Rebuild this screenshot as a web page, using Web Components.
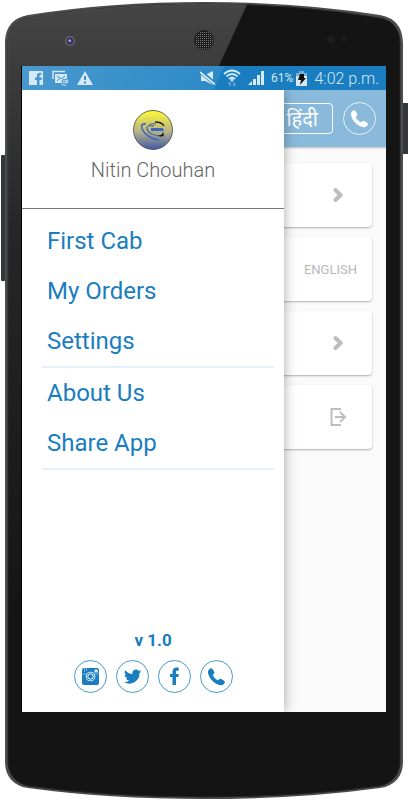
<!DOCTYPE html>
<html lang="en">
<head>
<meta charset="utf-8">
<meta name="viewport" content="width=device-width, initial-scale=1">
<title>First Cab</title>
<style>
    body {
        margin: 0;
        background: #fff;
        font-family: Roboto, "Noto Sans", sans-serif;
    }
</style>
</head>
<body>
<phone-frame>
    <status-bar></status-bar>
    <app-screen>
        <app-header></app-header>
        <option-card label="First Cab" icon="chevron"></option-card>
        <option-card label="Language" text="ENGLISH"></option-card>
        <option-card label="Settings" icon="chevron"></option-card>
        <option-card label="Logout" icon="logout"></option-card>
        <side-drawer slot="drawer" name="Nitin Chouhan" version="v 1.0">
            <menu-item>First Cab</menu-item>
            <menu-item>My Orders</menu-item>
            <menu-item divider>Settings</menu-item>
            <menu-item>About Us</menu-item>
            <menu-item divider>Share App</menu-item>
            <round-link slot="social" icon="instagram" label="Instagram"></round-link>
            <round-link slot="social" icon="twitter" label="Twitter"></round-link>
            <round-link slot="social" icon="facebook" label="Facebook"></round-link>
            <round-link slot="social" icon="phone" label="Call us"></round-link>
        </side-drawer>
    </app-screen>
</phone-frame>

<script>
const ROUND_ICONS = {
    phone: `<path fill="currentColor" d="M9.500 9c1-1 2-1 3 0l1.500 2.500c.6 1 .5 1.800-.3 2.500l-1 1c1 2.500 3 4.500 5.300 5.300l1.200-1c.8-.7 1.600-.7 2.500-.1l2.300 1.500c1 .7 1.200 1.500.5 2.500-1.500 2-3.500 2.500-6 1.600C13.500 23 9.700 18.800 8.300 14c-.7-2.200-.2-3.800 1.200-5z"/>`,
    instagram: `<path fill="currentColor" d="M10 8h13a2 2 0 0 1 2 2v13a2 2 0 0 1-2 2H10a2 2 0 0 1-2-2V10a2 2 0 0 1 2-2z"/>
        <path fill="#d9ecf7" d="M20.500 9.500H23a.8.8 0 0 1 .8.8v2.200h-3.300z"/>
        <path stroke="#8cc2e4" stroke-width=".8" d="M8 14h4M21 14h4M10.500 8v4M12.500 8v3"/>
        <circle cx="16.500" cy="16.500" r="4.800" fill="#fff"/><circle cx="16.500" cy="16.500" r="3.900" fill="currentColor"/>
        <circle cx="16.500" cy="16.500" r="2.700" fill="currentColor" stroke="#fff" stroke-width="1"/>`,
    twitter: `<g transform="translate(8 8) scale(.72)"><path fill="currentColor" d="M24 4.600a10 10 0 0 1-2.800.8 5 5 0 0 0 2.100-2.700 10 10 0 0 1-3.100 1.200 4.900 4.900 0 0 0-8.400 4.500A14 14 0 0 1 1.700 3.200a4.900 4.900 0 0 0 1.500 6.500 5 5 0 0 1-2.200-.6 4.900 4.900 0 0 0 3.900 4.900 5 5 0 0 1-2.200.1 4.900 4.900 0 0 0 4.600 3.400A10 10 0 0 1 0 19.500 14 14 0 0 0 21.500 7.100 10 10 0 0 0 24 4.600z"/></g>`,
    facebook: `<path fill="currentColor" d="M14.500 25v-8H12v-3h2.500v-2c0-3 1.500-4.500 4-4.500h2.200v3.200h-1.500c-.9 0-1.200.4-1.200 1.300v2h2.800l-.4 3H18v8z"/>`
};

const CARD_ICONS = {
    chevron: `<path d="M16.500 7l5 5-5 5" fill="none" stroke="#bdbdbd" stroke-width="4" stroke-linecap="round"/>`,
    logout: `<path d="M22 4H12.500v16H22" fill="none" stroke="#bdbdbd" stroke-width="2"/>
        <path d="M16 12h10M21 7l5 5-5 5" fill="none" stroke="#bdbdbd" stroke-width="2"/>`
};

class PhoneFrame extends HTMLElement {

    constructor() {
        super();
        this.shadowDOM = this.attachShadow({mode: "open"});
    }

    connectedCallback() {
        this.render();
    }

    render() {
        this.shadowDOM.innerHTML = `
        <style>
        :host {
            display: flex;
            position: relative;
            box-sizing: border-box;
            min-height: 100vh;
            padding: 66px 22px 88px;
        }

        .shell {
            position: absolute;
            inset: 0;
            width: 100%;
            height: 100%;
        }

        .display {
            position: relative;
            flex: 1;
            min-width: 0;
            display: flex;
            flex-direction: column;
            box-shadow: -1px 0 #000;
        }
        </style>
        <svg class="shell" viewBox="0 0 408 800" preserveAspectRatio="none" aria-hidden="true">
            <defs>
                <linearGradient id="gloss" x1="0" y1="0" x2="0" y2="1">
                    <stop offset="0" stop-color="#fff" stop-opacity=".21"/>
                    <stop offset=".35" stop-color="#fff" stop-opacity=".08"/>
                    <stop offset="1" stop-color="#fff" stop-opacity="0"/>
                </linearGradient>
                <pattern id="mesh" width="2" height="2" patternUnits="userSpaceOnUse">
                    <rect width="2" height="2" fill="#1c1c1c"/>
                    <rect width="1" height="1" fill="#777"/>
                </pattern>
                <clipPath id="body"><path d="M8 44C8 30 14 21 28 18Q110 4 204 4T380 18C394 21 400 30 400 44V761C400 774 393 783 380 786Q300 797 204 797T28 786C15 783 8 774 8 761z"/></clipPath>
            </defs>
            <rect x="1" y="155" width="6" height="126" rx="1" fill="#343839"/>
            <rect x="402" y="103" width="8" height="51" rx="1" fill="#343839"/>
            <path fill="#4b4c4d" d="M5 44C5 28 12 18 28 15Q110 2 204 2T380 15C396 18 403 28 403 44V762C403 776 395 786 380 788Q300 799 204 799T28 788C13 786 5 776 5 762z"/>
            <path fill="#141414" stroke="#252525" d="M8 44C8 30 14 21 28 18Q110 4 204 4T380 18C394 21 400 30 400 44V761C400 774 393 783 380 786Q300 797 204 797T28 786C15 783 8 774 8 761z"/>
            <path clip-path="url(#body)" fill="url(#gloss)" d="M0 0H249L219 66 0 640z"/>
            <circle cx="70" cy="41" r="5" fill="#666"/><circle cx="70" cy="41" r="3.500" fill="#34304f"/><circle cx="70" cy="41" r="1.800" fill="#5a50c8"/><circle cx="69.500" cy="40.500" r="1" fill="#d0ccef"/>
            <circle cx="204" cy="40" r="9.500" fill="url(#mesh)" stroke="#222"/>
            <circle cx="331" cy="39" r="4" fill="#1c1c1c"/><circle cx="344" cy="39" r="2.500" fill="#1e1e1e"/>
        </svg>
        <div class="display"><slot></slot></div>
        `;
    }
}

class StatusBar extends HTMLElement {

    constructor() {
        super();
        this.shadowDOM = this.attachShadow({mode: "open"});
    }

    connectedCallback() {
        this.render();
    }

    render() {
        this.shadowDOM.innerHTML = `
        <style>
        :host {
            display: flex;
            justify-content: space-between;
            box-sizing: border-box;
            height: 24px;
            padding: 0 7px;
            color: #d5e9f5;
            background: linear-gradient(113deg, #4999ce 0%, #2e8ac6 54%, #197dbf 54%);
        }

        .group {
            display: flex;
            align-items: center;
            gap: 7px;
        }

        .power {
            display: flex;
            align-items: center;
            gap: 3px;
            font-size: 12px;
        }

        .time {
            font-size: 16px;
            font-weight: 300;
        }
        </style>
        <div class="group">
            <svg width="14" height="14" viewBox="0 0 14 14"><path fill="currentColor" d="M0 0h14v14h-3.500V9h2.200V6.500h-2.200V5c0-1 .5-1.200 2-1.200V2C9.500 1.500 8 2.500 8 4.500v2H6V9h2v5H0z"/></svg>
            <svg width="20" height="16" viewBox="0 0 20 16"><path d="M3 9V1.500h12" fill="none" stroke="currentColor" stroke-width="1.500"/><path fill="currentColor" d="M5 4h12v4a5 5 0 0 0-6 5H5z"/><path d="M7 6l4 3 4-3M7 11l2.500-2.500" fill="none" stroke="#3a91ca"/><circle cx="14.500" cy="11.500" r="1.300" fill="none" stroke="currentColor"/><path d="M16 10v3q2 0 2-2a3.500 3.500 0 1 0-2 4" fill="none" stroke="currentColor"/></svg>
            <svg width="16" height="14" viewBox="0 0 16 14"><path fill="currentColor" d="M8 0l8 14H0z"/><path d="M8 5v4M8 10.500v2" stroke="#3a91ca" stroke-width="2"/></svg>
        </div>
        <div class="group">
            <svg width="16" height="14" viewBox="0 0 16 14"><path fill="currentColor" d="M1 4h4l8-4v14l-8-4H1z"/><path d="M0 0l16 14" stroke="#2383c2" stroke-width="4"/><path d="M0 1l15 12.500" stroke="currentColor" stroke-width="1.800"/></svg>
            <svg width="18" height="18" viewBox="0 0 18 18"><path d="M1 5q8-7 16 0M3.500 7.500q5.500-5 11 0M6 10q3-2.500 6 0" fill="none" stroke="currentColor" stroke-width="1.700"/><circle cx="9" cy="11" r="1.500" fill="currentColor"/><path d="M7 17v-4l-1.500 2M11 13v4l1.500-2" fill="none" stroke="#83bbdf"/></svg>
            <svg width="16" height="14" viewBox="0 0 16 14"><path fill="currentColor" d="M13 0h3v14h-3zM9 4h3v10H9zM5 8h3v6H5zM0 14l4-4v4z"/></svg>
            <span class="power">
                <span>61%</span>
                <svg width="11" height="15" viewBox="0 0 11 15"><path fill="#72b0d9" d="M3 0h5v2h3v5H0V2h3z"/><path fill="currentColor" d="M0 5h11v10H0z"/><path fill="#111" d="M4 3h4v4h2l-6 7 1-5H2z"/></svg>
            </span>
            <span class="time">4:02 p.m.</span>
        </div>
        `;
    }
}

class AppScreen extends HTMLElement {

    constructor() {
        super();
        this.shadowDOM = this.attachShadow({mode: "open"});
    }

    connectedCallback() {
        this.render();
    }

    render() {
        this.shadowDOM.innerHTML = `
        <style>
        :host {
            display: block;
            position: relative;
            flex: 1;
            overflow: hidden;
            background: #fafafa;
        }

        .page {
            display: flex;
            flex-direction: column;
            gap: 10px;
        }
        </style>
        <div class="page"><slot></slot></div>
        <slot name="drawer"></slot>
        `;
    }
}

class AppHeader extends HTMLElement {

    constructor() {
        super();
        this.shadowDOM = this.attachShadow({mode: "open"});
    }

    connectedCallback() {
        this.render();
    }

    render() {
        this.shadowDOM.innerHTML = `
        <style>
        :host {
            display: flex;
            align-items: center;
            justify-content: flex-end;
            gap: 10px;
            box-sizing: border-box;
            height: 57px;
            margin-bottom: 6px;
            padding-right: 10px;
            color: #fff;
            background: #8abadb;
            box-shadow: 0 1px 2px rgba(0, 0, 0, 0.25);
        }

        button {
            box-sizing: border-box;
            height: 31px;
            padding: 0 14px;
            border: 1px solid #fff;
            border-radius: 4px;
            background: none;
            color: #fff;
            font-family: inherit;
            font-size: 20px;
            line-height: 28px;
        }
        </style>
        <button type="button" lang="hi">हिंदी</button>
        <round-link icon="phone" label="Call"></round-link>
        `;
    }
}

class RoundLink extends HTMLElement {

    constructor() {
        super();
        this.shadowDOM = this.attachShadow({mode: "open"});
    }

    connectedCallback() {
        this.render();
    }

    render() {
        this.shadowDOM.innerHTML = `
        <style>
        :host {
            display: block;
        }

        a {
            display: block;
            color: inherit;
        }

        svg {
            display: block;
        }
        </style>
        <a href="#" aria-label="${this.getAttribute("label")}">
            <svg width="33" height="33" viewBox="0 0 33 33">
                <circle cx="16.500" cy="16.500" r="16" fill="none" stroke="currentColor" stroke-width=".8"/>
                ${ROUND_ICONS[this.getAttribute("icon")]}
            </svg>
        </a>
        `;
    }
}

class OptionCard extends HTMLElement {

    constructor() {
        super();
        this.shadowDOM = this.attachShadow({mode: "open"});
    }

    connectedCallback() {
        this.render();
    }

    render() {
        const icon = CARD_ICONS[this.getAttribute("icon")];
        const content = icon
            ? `<svg width="38" height="24" viewBox="0 0 38 24">${icon}</svg>`
            : this.getAttribute("text");
        this.shadowDOM.innerHTML = `
        <style>
        :host {
            display: block;
            margin: 0 14px;
        }

        button {
            display: flex;
            align-items: center;
            justify-content: flex-end;
            width: 100%;
            height: 64px;
            padding: 0 15px;
            border: 0;
            border-radius: 4px;
            background: #fff;
            box-shadow: 0 1px 2px rgba(0, 0, 0, 0.3);
            color: #b8b8b8;
            font-family: inherit;
            font-size: 13px;
        }
        </style>
        <button type="button" aria-label="${this.getAttribute("label")}">${content}</button>
        `;
    }
}

class SideDrawer extends HTMLElement {

    constructor() {
        super();
        this.shadowDOM = this.attachShadow({mode: "open"});
    }

    connectedCallback() {
        this.render();
    }

    render() {
        this.shadowDOM.innerHTML = `
        <style>
        :host {
            display: flex;
            flex-direction: column;
            position: absolute;
            top: 0;
            bottom: 0;
            left: 0;
            width: 72%;
            background: #fff;
            color: #197dbf;
            box-shadow: 0 0 12px rgba(0, 0, 0, 0.35);
        }

        header {
            display: flex;
            flex-direction: column;
            align-items: center;
            gap: 8px;
            padding: 20px 0 26px;
            border-bottom: 1px solid #777;
        }

        .name {
            color: #666;
            font-size: 20px;
            font-weight: 300;
            line-height: 24px;
        }

        nav {
            flex: 1;
            padding: 7px 10px 0 20px;
        }

        footer {
            display: flex;
            flex-direction: column;
            align-items: center;
            gap: 10px;
            padding-bottom: 19px;
            font-size: 17px;
            font-weight: bold;
            line-height: 20px;
        }

        .social {
            display: flex;
            gap: 9px;
        }
        </style>
        <header>
            <svg width="40" height="40" viewBox="0 0 40 40" aria-hidden="true">
                <defs><linearGradient id="sky" x1="0" y1="0" x2="0" y2="1"><stop offset=".05" stop-color="#f8f43a"/><stop offset=".55" stop-color="#b5b18c"/><stop offset="1" stop-color="#4258a8"/></linearGradient></defs>
                <circle cx="20" cy="20" r="19.500" fill="url(#sky)" stroke="#444" stroke-width=".8"/>
                <path d="M13 14c-6-1-5 4-2 8s9 7 15 8" fill="none" stroke="#3f68bd" stroke-width="1.600"/>
                <path d="M28 26c-7 0-13-3-14-7-1-3 3-4 7-3" fill="none" stroke="#526c9f" stroke-width="1.300"/>
                <path fill="#3f68bd" d="M18 18h12l1 3H18z"/>
                <path d="M16 15q2-2 7-1" fill="none" stroke="#4a5f96"/>
                <path d="M22 12q7 0 9 4" fill="none" stroke="#222" stroke-width="1.300"/>
                <path fill="#151515" d="M25 25q4 1 5-3l1 3q-2 3-6 0z"/>
            </svg>
            <span class="name">${this.getAttribute("name")}</span>
        </header>
        <nav><slot></slot></nav>
        <footer>
            <span>${this.getAttribute("version")}</span>
            <div class="social"><slot name="social"></slot></div>
        </footer>
        `;
    }
}

class MenuItem extends HTMLElement {

    constructor() {
        super();
        this.shadowDOM = this.attachShadow({mode: "open"});
    }

    connectedCallback() {
        this.render();
    }

    render() {
        this.shadowDOM.innerHTML = `
        <style>
        :host {
            display: block;
        }

        :host([divider]) {
            border-bottom: 2px solid #e6f0fc;
        }

        a {
            display: block;
            padding-left: 5px;
            color: inherit;
            font-size: 24px;
            line-height: 50px;
            text-decoration: none;
        }
        </style>
        <a href="#"><slot></slot></a>
        `;
    }
}

customElements.define("phone-frame", PhoneFrame);
customElements.define("status-bar", StatusBar);
customElements.define("app-screen", AppScreen);
customElements.define("app-header", AppHeader);
customElements.define("round-link", RoundLink);
customElements.define("option-card", OptionCard);
customElements.define("side-drawer", SideDrawer);
customElements.define("menu-item", MenuItem);
</script>
</body>
</html>
